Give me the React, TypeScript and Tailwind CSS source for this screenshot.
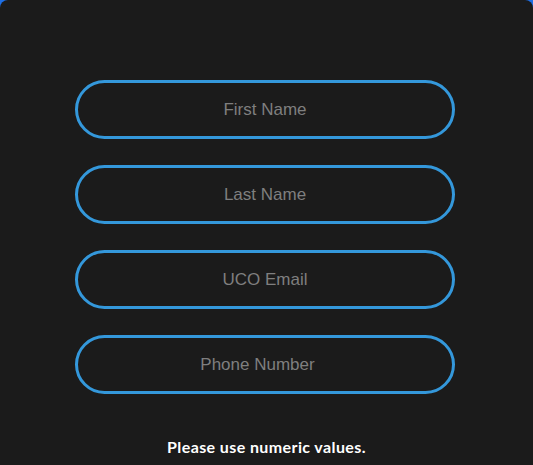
export default function App() {
  const fields = [
    { label: "First Name", type: "text" },
    { label: "Last Name", type: "text" },
    { label: "UCO Email", type: "email" },
    { label: "Phone Number", type: "number" },
  ]

  return (
    <div className="min-h-screen bg-[#1e6fe6]">
      <div className="flex min-h-[600px] flex-col items-center rounded-lg bg-[#1b1b1b] pt-[80px]">
        <form className="flex flex-col gap-[26px] pr-[3px]">
          {fields.map((f) => (
            <input
              key={f.label}
              type={f.type}
              placeholder={f.label}
              className="h-[59px] w-[380px] rounded-full border-[3px] border-[#3498db] bg-transparent text-center text-[17px] text-white outline-none placeholder:text-[#7f7f7f] [font-family:'Liberation_Sans',Arial,sans-serif]"
            />
          ))}
        </form>
        <p className="mt-[41px] text-[16px] font-bold tracking-[0.4px] text-white [font-family:'Comic_Sans_MS','Lato',sans-serif]">
          Please use numeric values.
        </p>
      </div>
    </div>
  )
}
